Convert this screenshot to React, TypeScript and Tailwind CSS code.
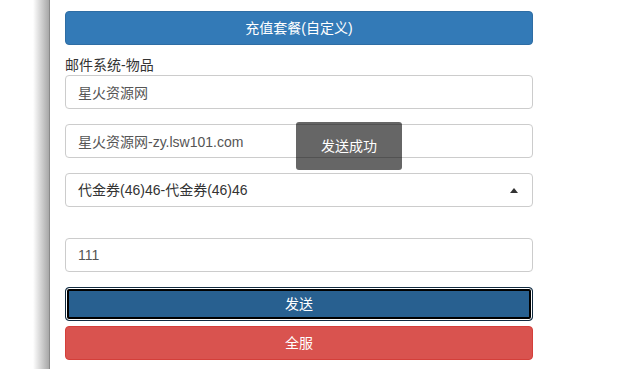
import { useState } from "react";

const field =
  "h-[34px] w-full rounded-[4px] border border-[#ccc] bg-white px-3 text-[14px] text-[#555] outline-none";

export default function App() {
  const [server] = useState("星火资源网");
  const [site] = useState("星火资源网-zy.lsw101.com");
  const [count, setCount] = useState("111");

  return (
    <div
      className="relative flex h-[369px] w-[629px] overflow-hidden bg-white"
      style={{ fontFamily: '"Liberation Sans", "Noto Sans CJK SC", sans-serif' }}
    >
      {/* page shadow on the left */}
      <div className="flex w-[50px] shrink-0">
        <div className="w-[33px] bg-white" />
        <div className="w-[16px] bg-gradient-to-r from-white to-[#a8a8a8]" />
        <div className="w-px bg-[#8a8a8a]" />
      </div>

      <div className="flex-1 pl-[15px] pt-[11px]">
        <div className="flex w-[468px] flex-col">
          <button className="h-[34px] w-full rounded-[4px] border border-[#2e6da4] bg-[#337ab7] text-[14px] text-white">
            充值套餐(自定义)
          </button>

          <label className="mt-[10px] block h-[20px] text-[14px] leading-[20px] text-[#333]">
            邮件系统-物品
          </label>
          <input className={field} value={server} readOnly />

          <input className={`${field} mt-[15px]`} value={site} readOnly />

          <div className={`${field} mt-[15px] flex items-center justify-between`}>
            <span className="text-[#333]">代金券(46)46-代金券(46)46</span>
            <svg width="8" height="5" viewBox="0 0 8 5" className="mr-[2px]">
              <path d="M0 5 L4 0 L8 5 Z" fill="#333" />
            </svg>
          </div>

          <input
            className={`${field} mt-[31px]`}
            value={count}
            onChange={(e) => setCount(e.target.value)}
          />

          <button className="mt-[15px] h-[34px] w-full rounded-[4px] border border-[#122b40] bg-[#286090] text-[14px] text-white shadow-[inset_0_0_0_1px_#fff,inset_0_0_0_3px_#000]">
            发送
          </button>
          <button className="mt-[5px] h-[34px] w-full rounded-[4px] border border-[#d43f3a] bg-[#d9534f] text-[14px] text-white">
            全服
          </button>
        </div>
      </div>

      {/* toast */}
      <div className="absolute left-[296px] top-[122px] flex h-[48px] w-[106px] items-center justify-center rounded-[3px] bg-black/60 text-[14px] text-white">
        发送成功
      </div>
    </div>
  );
}
